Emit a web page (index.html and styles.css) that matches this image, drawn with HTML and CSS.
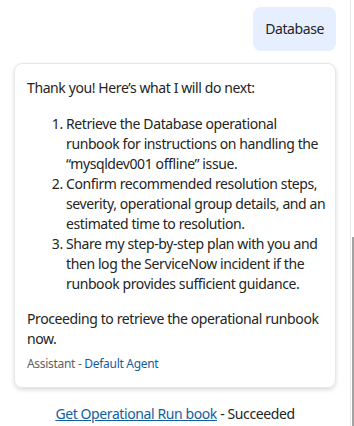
FILE: index.html
```html
<!DOCTYPE html>
<html>
<head>
<meta charset="utf-8">
<link rel="stylesheet" href="styles.css">
</head>
<body>
<div class="page">
  <div class="chat">
    <div class="user-row">
      <div class="user-bubble">Database</div>
    </div>
    <div class="card">
      <p class="intro">Thank you! Here’s what I will do next:</p>
      <ol class="steps">
        <li>Retrieve the Database operational runbook for instructions on handling the “mysqldev001 offline” issue.</li>
        <li>Confirm recommended resolution steps, severity, operational group details, and an estimated time to resolution.</li>
        <li>Share my step-by-step plan with you and then log the ServiceNow incident if the runbook provides sufficient guidance.</li>
      </ol>
      <p class="outro">Proceeding to retrieve the operational runbook now.</p>
      <div class="meta">Assistant - <span class="agent">Default Agent</span></div>
    </div>
    <div class="status"><a class="status-link" href="#">Get Operational Run book</a> - Succeeded</div>
  </div>
  <div class="scrollbar"><div class="thumb"></div></div>
</div>
</body>
</html>
```
FILE: styles.css
```css
html, body {
  margin: 0;
  padding: 0;
  background: #ffffff;
}
body {
  font-family: "Noto Sans", "Open Sans", sans-serif;
  font-size: 14px;
  letter-spacing: -0.4px;
  color: #242424;
}
.page {
  display: flex;
  height: 426px;
  overflow: hidden;
}
.chat {
  flex: 1;
  padding: 7px 14px 0 14px;
  min-width: 0;
}
.user-row {
  display: flex;
  justify-content: flex-end;
}
.user-bubble {
  background: #e6efff;
  border-radius: 8px;
  padding: 12px 12px;
  line-height: 20px;
  height: 20px;
}
.card {
  margin-top: 12px;
  border: 1px solid #e6e6e6;
  border-radius: 8px;
  box-shadow: 0 2px 4px rgba(0,0,0,0.14);
  padding: 14px 5px 15px 12px;
  line-height: 20px;
}
.intro {
  margin: 0;
}
.steps {
  margin: 16px 0 15px 0;
  padding-left: 39px;
}
.steps li {
  margin: 0;
}
.outro {
  margin: 0;
}
.meta {
  margin-top: 7px;
  font-size: 12px;
  line-height: 16px;
  letter-spacing: -0.3px;
  color: #616161;
}
.agent {
  color: #115ea3;
}
.status {
  margin-top: 16px;
  text-align: center;
  line-height: 20px;
}
.status-link {
  color: #115ea3;
  text-decoration: underline;
}
.scrollbar {
  width: 3px;
  border-left: 1px solid #ebebeb;
  display: flex;
  flex-direction: column;
  justify-content: flex-end;
}
.thumb {
  height: 189px;
  background: #a3a3a3;
  width: 2px;
  margin-left: auto;
}
```
